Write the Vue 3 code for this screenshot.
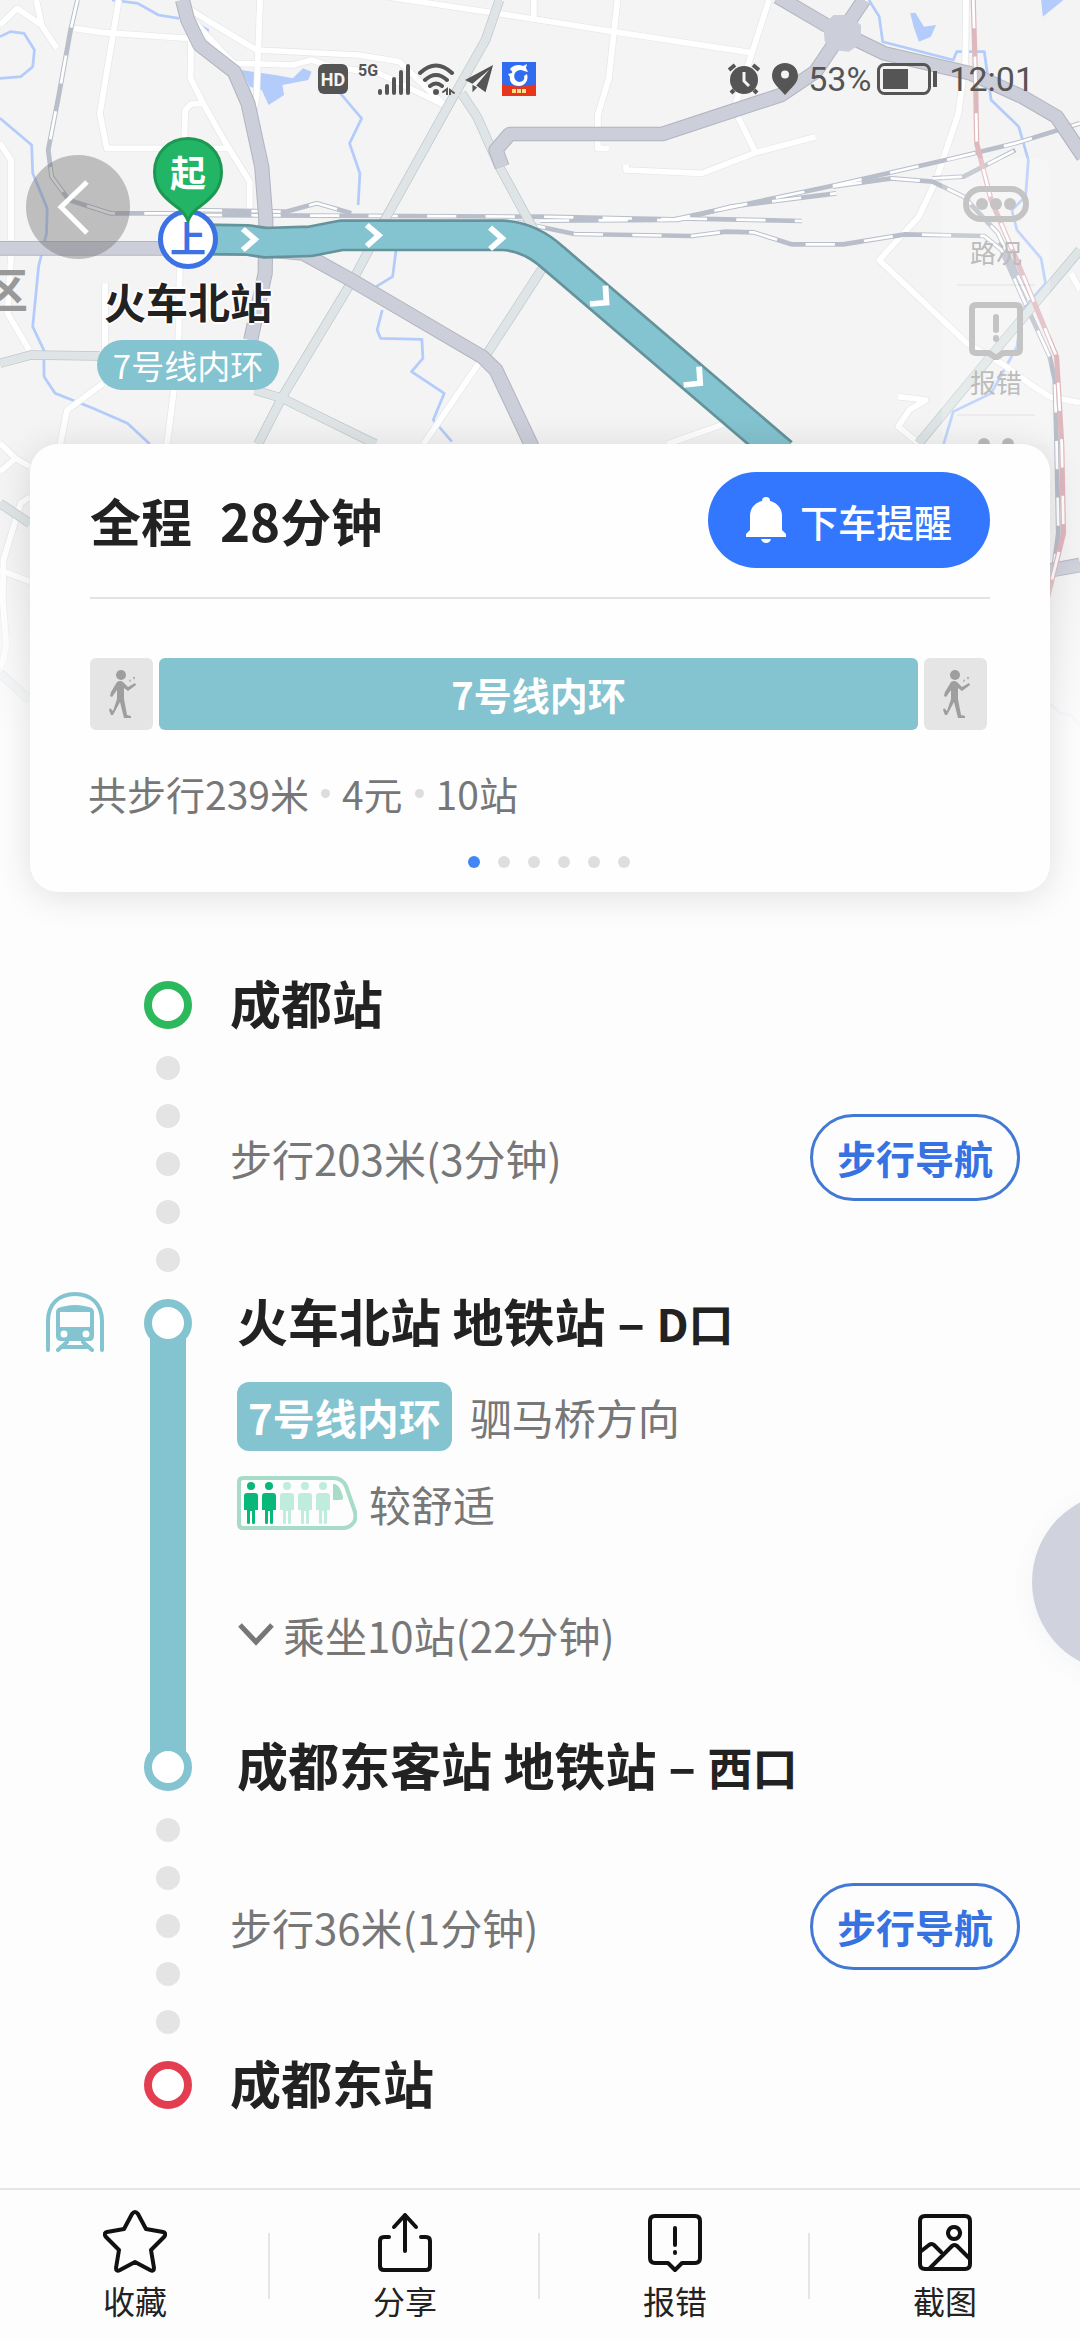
<template>
  <div class="page">
    <header class="map-area">
      <svg class="map" viewBox="0 0 3136 2205" preserveAspectRatio="none" aria-hidden="true">
        <path v-for="d in rivers" :key="d" :d="d" class="river" />
        <path v-for="d in lakes" :key="d" :d="d" class="lake" />
        <path v-for="d in streets" :key="'o' + d" :d="d" class="street-edge" />
        <path v-for="d in streets" :key="d" :d="d" class="street" />
        <path v-for="d in rails" :key="'b' + d" :d="d" class="rail" />
        <path v-for="d in rails" :key="d" :d="d" class="rail-dash" />
        <path v-for="d in avenues" :key="'o' + d" :d="d" class="avenue-edge" />
        <path v-for="d in avenues" :key="d" :d="d" class="avenue" />
        <path v-for="d in highways" :key="'o' + d" :d="d" class="highway-edge" />
        <path v-for="d in highways" :key="d" :d="d" class="highway" />
        <path d="M2390 75 2420 45 2465 45 2500 75 2500 130 2465 155 2420 150 2395 125Z" class="junction" />
        <path :d="redLine" class="red-line" />
        <path :d="redLine" class="rail-dash" />
        <path :d="route" class="route-edge" />
        <path :d="route" class="route" />
        <path v-for="d in arrows" :key="d" :d="d" class="arrow" />
      </svg>
      <div class="map-fade"></div>

      <div class="status-bar">
        <div class="status-group">
          <span class="hd">HD</span>
          <span class="net">5G</span>
          <svg class="signal" viewBox="0 0 32 32">
            <path d="M2 28v2M9 23v7M16 16v14M23 9v21M30 3v27" />
          </svg>
          <svg class="wifi" viewBox="0 0 38 32">
            <path d="M2 10Q18-5 34 10M7 17Q18 7 29 17M12 23Q18 18 24 23" />
            <circle cx="18" cy="29" r="3" />
            <path class="wifi-arrows" d="M25 29l4-3v6M36 30l-4-3v5" />
          </svg>
          <svg class="plane" viewBox="0 0 32 32">
            <path d="M31 1 1 17l8 4L27 6 13 23l10 7z" />
            <path d="M9 22v8l5-5z" />
          </svg>
          <svg class="app" viewBox="0 0 34 34">
            <path fill="#2f6cf0" d="M0 0h34v34H0z" />
            <path fill="#e8361c" d="M0 22q17 5 34 0v12H0z" />
            <path fill="#fff" d="M8 7c3-4 9-5 13-3l4-2-1 4 2 4-4-1c-3-2-7-1-9 2-2 4 0 8 4 9 4 0 6-3 5-6l3-2c2 6-2 12-8 12-7 0-10-5-9-9l-2-3 4-1c1-2-1-2-2-4z" />
            <path stroke="#ffe08a" stroke-width="4" stroke-dasharray="4 1" d="M10 29h15" />
          </svg>
        </div>
        <div class="status-group">
          <svg class="alarm" viewBox="0 0 32 32">
            <circle cx="16" cy="17" r="14" />
            <path class="alarm-legs" d="M1 7l6-5M31 7l-6-5M6 27l-3 3M26 27l3 3" />
            <path class="alarm-hands" d="M16 9v9l5 5" />
          </svg>
          <svg class="place" viewBox="0 0 26 32">
            <path fill-rule="evenodd" d="M13 0C6 0 0 5 0 13c0 7 7 12 13 19 6-7 13-12 13-19C26 5 20 0 13 0zm0 7.500a4 4 0 1 1 0 8 4 4 0 0 1 0-8z" />
          </svg>
          <span>53%</span>
          <svg class="battery" viewBox="0 0 60 32">
            <rect x="1.500" y="1.500" width="51" height="29" rx="6" />
            <path d="M6 6h25v20H6zM56 8h4v16h-4z" />
          </svg>
          <span>12:01</span>
        </div>
      </div>

      <button class="back" aria-label="返回">
        <svg viewBox="0 0 104 104"><path d="M61 27 35 52l26 26" /></svg>
      </button>

      <span class="district">区</span>

      <div class="start">
        <svg class="start-pin" viewBox="0 0 70 86">
          <path d="M35 1.500C16 1.500 1.500 16 1.500 35c0 16 9 25 21 34 6 4 10 8 12.500 15 2.500-7 6.500-11 12.500-15 12-9 21-18 21-34C68.500 16 54 1.500 35 1.500z" />
        </svg>
        <span class="start-text">起</span>
        <span class="board">上</span>
        <strong class="start-name">火车北站</strong>
        <span class="start-line">7号线内环</span>
      </div>

      <div class="tools">
        <button class="tool">
          <svg class="traffic-icon" viewBox="0 0 66 36">
            <rect x="3" y="3" width="60" height="30" rx="15" />
            <circle cx="19" cy="18" r="6" /><circle cx="33" cy="18" r="6" /><circle cx="47" cy="18" r="6" />
          </svg>
          路况
        </button>
        <button class="tool report">
          <svg class="report-icon" viewBox="0 0 54 58">
            <path d="M7 3h40q4 0 4 4v40q0 4-4 4H34l-7 5-7-5H7q-4 0-4-4V7q0-4 4-4zM27 15v13M27 36v1" />
          </svg>
          报错
        </button>
        <div class="tool-more"><i></i><i></i></div>
      </div>
    </header>

    <section class="card">
      <div class="card-head">
        <h1><span>全程</span><span>28分钟</span></h1>
        <button class="remind">
          <svg viewBox="0 0 40 48">
            <path d="M20 1a4 4 0 0 1 4 4c8 2 12 8 12 15v14l4 4v3H0v-3l4-4V20C4 13 8 7 16 5a4 4 0 0 1 4-4zM15 43h10q-1 4-5 4t-5-4z" />
          </svg>
          下车提醒
        </button>
      </div>
      <div class="segments">
        <span class="seg-walk"><svg viewBox="0 0 28 48"><path :d="walker" /><circle cx="13" cy="5" r="5" /></svg></span>
        <span class="seg-line">7号线内环</span>
        <span class="seg-walk"><svg viewBox="0 0 28 48"><path :d="walker" /><circle cx="13" cy="5" r="5" /></svg></span>
      </div>
      <p class="summary">
        <template v-for="(item, index) in summary" :key="item">
          <i v-if="index"></i><span>{{ item }}</span>
        </template>
      </p>
      <div class="pager">
        <i v-for="n in 6" :key="n" :class="{ active: n === page }"></i>
      </div>
    </section>

    <main class="steps">
      <div class="stop">
        <i class="ring green"></i>
        <h2>成都站</h2>
      </div>

      <div class="walk">
        <div class="dots"><i v-for="n in 5" :key="n"></i></div>
        <span>步行203米(3分钟)</span>
        <button class="navigate">步行导航</button>
      </div>

      <div class="ride">
        <svg class="metro" viewBox="0 0 58 60">
          <path class="metro-line" d="M2 58V29C2 12 13 2 29 2s27 10 27 27v29M21 50 12 58M37 50l9 8M15 55h28" />
          <path fill-rule="evenodd" d="M20 14q9-2 18 0l5 1q5 1 5 5v24q0 5-5 5H15q-5 0-5-5V20q0-4 5-5zM14 20v15h30V20zM18 38.500a3.500 3.500 0 1 0 0 7 3.500 3.500 0 0 0 0-7zM40 38.500a3.500 3.500 0 1 0 0 7 3.500 3.500 0 0 0 0-7z" />
        </svg>
        <div class="rail-col">
          <i class="ring"></i>
          <div class="rail-bar"></div>
          <i class="ring"></i>
        </div>
        <div class="ride-info">
          <h2>火车北站 地铁站 – <small>D口</small></h2>
          <div class="line-row">
            <span class="line-tag">7号线内环</span>
            <span>驷马桥方向</span>
          </div>
          <div class="crowd-row">
            <svg class="crowd" viewBox="0 0 120 54">
              <path class="crowd-frame" d="M6 2h90q9 0 13 8l8 23q3 8 0 13-4 6-11 6H6q-4 0-4-4V6q0-4 4-4z" />
              <path fill="#a6dcc8" d="M96 8h2q5 1 8 13 0 3-2 3h-8z" />
              <g v-for="n in 5" :key="n" :class="n < 3 ? 'person' : 'person free'" :transform="`translate(${n * 18 - 12} 6)`">
                <circle cx="8" cy="4" r="4" />
                <path d="M4 11h8q3 0 3 3v14h-3v13q0 1-1.500 1T9 41V29H7v12q0 1-1.500 1T4 41V28H1V14q0-3 3-3z" />
              </g>
            </svg>
            <span>较舒适</span>
          </div>
          <button class="expand">
            <svg viewBox="0 0 38 26"><path d="M3 4 19 21 35 4" /></svg>
            乘坐10站(22分钟)
          </button>
          <h2>成都东客站 地铁站 – <small>西口</small></h2>
        </div>
      </div>

      <div class="walk">
        <div class="dots"><i v-for="n in 5" :key="n"></i></div>
        <span>步行36米(1分钟)</span>
        <button class="navigate">步行导航</button>
      </div>

      <div class="stop">
        <i class="ring red"></i>
        <h2>成都东站</h2>
      </div>
    </main>

    <button class="floating" aria-label="悬浮球"></button>

    <nav class="actions">
      <button v-for="action in actions" :key="action.label">
        <svg viewBox="0 0 64 64">
          <path v-for="d in action.paths" :key="d" :d="d" />
        </svg>
        {{ action.label }}
      </button>
    </nav>
  </div>
</template>

<script setup>
import { ref } from 'vue'

const page = ref(1)
const summary = ['共步行239米', '4元', '10站']

const actions = [
  {
    label: '收藏',
    paths: ['M29 5q3-4 6 0l8 15 17 3q4 1 1 5L48 41l3 18q0 4-4 2L32 53 17 61q-4 2-4-2l3-18L3 28q-3-4 1-5l17-3z']
  },
  {
    label: '分享',
    paths: ['M32 42V6M21 18 32 6l11 12', 'M16 28h-5q-4 0-4 4v25q0 4 4 4h42q4 0 4-4V32q0-4-4-4h-5']
  },
  {
    label: '报错',
    paths: ['M12 7h40q5 0 5 5v37q0 5-5 5H39l-7 7-7-7H12q-5 0-5-5V12q0-5 5-5z', 'M32 19v17M32 43v1']
  },
  {
    label: '截图',
    paths: ['M12 7h40q5 0 5 5v43q0 5-5 5H12q-5 0-5-5V12q0-5 5-5z', 'M7 43l9-7q3-2 5 0l7 7M17 59l22-22q2-2 5 0l13 13', 'M41 18a6 6 0 1 0 .1 0z']
  }
]

const walker = 'M9 12q3-2 6 0l5 5 7-4 1 2-8 6-4-3v11l3 16 4 1v2h-7l-4-16-7 13H3l-2-5 1-2 3 3 4-12V20l-5 7-2-1 1-4zM22 9l1 2-2 1zM25 7h2l-1 3z'

// map geometry
const rivers = [
  'M325 0 400 10 460 45 520 55',
  'M0 110 30 95 70 100 100 150 95 200 60 230 0 235',
  'M0 355 92 435 95 520 137 625 135 700 112 800 95 980 127 1050 128 1130 160 1180 270 1225 370 1270 435 1332',
  'M570 70 603 90 598 115',
  'M980 270 1050 355 1015 430 1045 520 1040 615',
  'M1150 750 1140 830 1092 860M1110 930 1095 990 1105 1015 1225 1018 1228 1075 1195 1115 1290 1180 1258 1260 1312 1325',
  'M2523 0 2553 50 2563 125 2768 180 2778 155 2858 155 2878 300 2958 380 2986 480 2978 590 2938 630 2953 690 3023 775 3036 850 2968 930 2953 1040 2878 1180 2768 1235 2740 1332',
  'M3049 2110 3078 2140 3110 2145 3136 2175'
]
const lakes = [
  'M700 210 800 225 850 235 880 205 905 215 895 240 820 255 825 285 780 315 760 270 725 260Z',
  'M2643 40 2658 38 2683 80 2718 75 2703 110 2668 125 2653 80Z',
  'M3023 0H3088L3028 50Z'
]
const streets = [
  'M345 0 290 340 310 445H660',
  'M215 85 300 98 550 115',
  'M555 120 553 235 590 310 650 420 725 545V650',
  'M590 310 555 312 538 330 535 420',
  'M755 0 745 290 735 340',
  'M555 30 600 60 745 150 1040 165 1160 185 1290 315',
  'M550 50 640 150 680 190 850 195 905 180 960 200 1100 220 1290 315',
  'M1120 -10 1568 60 1780 95 2180 158',
  'M1550 0V65',
  'M1793 0 1768 235 1736 345V445H1768',
  'M2233 0 2183 160 2133 320M2143 350 2193 455M2368 410 2188 460 2038 520 1818 510V495',
  'M2805 0 2803 180 2783 340 2718 540 2668 650 2553 780 2808 1030 2908 1090 2988 1150 3048 1190 3136 1208',
  'M0 75 50 25 120 75 165 145M105 0 120 70',
  'M0 430 32 480V720M32 765 22 940 85 1050',
  'M305 850V1050M522 800 518 1020M505 1170 485 1332M300 1150 195 1230 175 1332',
  'M1390 1090 1230 1332',
  'M2108 1270 1938 1332',
  'M2608 1190 2688 1200 2640 1230 2608 1280 2668 1330M3110 820 3136 870',
  'M0 1330 45 1375 87 1400M45 1375 0 1415',
  'M87 1490 60 1510 10 1680 8 1800 18 1930 10 1980 0 2000',
  'M0 1710 87 1745'
]
const avenues = [
  'M1450 0 1410 120 1300 320 1120 655 1030 830 820 1190 750 1332',
  'M1340 280 1385 350 1450 500 1550 690',
  'M1578 800 1415 1060',
  'M740 1170 820 1195 1090 1332',
  'M0 1090 90 1065 290 1068',
  'M3136 750 2908 1030 2668 1330',
  'M0 1510 87 1570M0 2020 87 2100'
]
const highways = [
  'M530 0 545 60 580 135 680 215 720 310 760 500 772 660 770 820 728 1020',
  'M0 745H720L880 760 1020 840 1400 1070 1440 1110 1545 1340',
  'M1458 500 1440 450 1480 402H1923L2268 285 2368 215 2443 100 2508 0',
  'M2258 -10 2398 75 2448 100 2568 160 2818 220 2968 290 3068 350 3146 470',
  'M3030 1715 3136 1695'
]
const rails = [
  'M225 0 205 90 170 290 140 450 150 530 200 600 320 640 560 640',
  'M560 630 830 635 920 610 1020 640',
  'M560 645 1568 650 1958 658 2428 555 2768 475 2948 430 3136 370',
  'M1568 662 1968 660 2120 620 2428 580',
  'M1968 655 2328 663',
  'M1500 665 1568 680 1668 702 2008 708 2108 695 2188 697 2298 733 2448 733 2628 703 2858 708 2908 750 2968 890 3048 1070 3063 1140 3068 1332 3073 1600 3060 1700',
  'M2418 560 2588 535 2708 545 2798 590 2898 700 2988 900',
  'M2708 535 2798 530 2948 450'
]
const redLine = 'M2826 0 2833 250 2836 430 2878 600 2948 770 3068 1070 3083 1332 3088 1600 3040 1800'
const route = 'M590 718 720 720 770 728 900 724 990 706H1460Q1540 710 1608 775L2270 1360'
const arrows = [
  'M705 687 740 718 705 750',
  'M1065 675 1100 706 1065 738',
  'M1423 683 1458 715 1423 747',
  'M1758 857 1761 908 1713 912',
  'M2030 1100 2033 1150 1985 1155'
]
</script>

<style>
body {
  background: #fdfdfd;
}
</style>

<style scoped>
.page {
  position: relative;
  display: flex;
  flex-direction: column;
  min-height: 100vh;
  overflow: hidden;
  color: #222;
  font-family: "Noto Sans CJK SC", "Noto Sans", sans-serif;
}

h1,
h2,
p {
  margin: 0;
}

button {
  padding: 0;
  border: 0;
  background: none;
  color: inherit;
  font: inherit;
}

svg {
  display: block;
  flex: none;
}

i {
  display: block;
}

/* map */
.map-area {
  position: relative;
  height: 444px;
}

.map,
.map-fade {
  position: absolute;
  top: 0;
  left: 0;
  width: 100%;
  height: 735px;
}

.map {
  background: #f4f4f4;
}

.map path {
  fill: none;
  stroke-linejoin: round;
}

.map-fade {
  background: linear-gradient(rgba(253, 253, 253, 0) 75%, #fdfdfd);
}

.map .river {
  stroke: #b3ccfb;
  stroke-width: 8;
}

.map .lake {
  fill: #b3ccfb;
}

.map .junction {
  fill: #ccced9;
}

.map .street-edge {
  stroke: #e4e6e8;
  stroke-width: 21;
}

.map .street {
  stroke: #fff;
  stroke-width: 17;
}

.map .rail {
  stroke: #b9bfca;
  stroke-width: 14;
}

.map .rail-dash {
  stroke: #fff;
  stroke-width: 8;
  stroke-dasharray: 85;
}

.map .avenue-edge {
  stroke: #bcc8ca;
  stroke-width: 28;
}

.map .avenue {
  stroke: #dfe5e7;
  stroke-width: 24;
}

.map .highway-edge {
  stroke: #b2b5c0;
  stroke-width: 44;
}

.map .highway {
  stroke: #ccced9;
  stroke-width: 38;
}

.map .red-line {
  stroke: #dfb8be;
  stroke-width: 15;
}

.map .route-edge {
  stroke: #64939b;
  stroke-width: 96;
}

.map .route {
  stroke: #84c3d0;
  stroke-width: 80;
}

.map .arrow {
  stroke: #fff;
  stroke-width: 17;
  stroke-linejoin: miter;
}

/* status bar */
.status-bar {
  position: relative;
  display: flex;
  justify-content: space-between;
  align-items: center;
  height: 34px;
  padding: 62px 46px 0 318px;
  color: #555;
  font: 34px/34px Roboto, sans-serif;
}

.status-group {
  display: flex;
  align-items: center;
}

.status-group svg {
  height: 32px;
  fill: #555;
}

.hd {
  width: 30px;
  height: 30px;
  border-radius: 6px;
  background: #555;
  color: #f4f4f4;
  font-size: 18px;
  font-weight: 700;
  line-height: 31px;
  text-align: center;
}

.net {
  align-self: flex-start;
  margin-left: 10px;
  font-size: 16px;
  font-weight: 700;
  line-height: 18px;
}

.signal {
  width: 32px;
}

.signal path,
.wifi path {
  fill: none;
  stroke: #555;
  stroke-width: 4;
  stroke-linecap: round;
}

.wifi .wifi-arrows {
  stroke-width: 2;
}

.wifi {
  width: 38px;
  margin-left: 8px;
}

.plane {
  width: 30px;
  margin-left: 8px;
}

.status-group .app {
  width: 34px;
  height: 34px;
  margin-left: 8px;
}

.alarm {
  width: 32px;
}

.alarm .alarm-legs,
.alarm .alarm-hands {
  fill: none;
  stroke: #555;
  stroke-width: 4;
}

.alarm .alarm-hands {
  stroke: #f4f4f4;
  stroke-width: 3;
}

.place {
  width: 26px;
  margin: 0 10px 0 12px;
}

.battery {
  width: 60px;
  margin: 0 12px 0 6px;
}

.battery rect {
  fill: none;
  stroke: #555;
  stroke-width: 3;
}

/* things laid over the map */
.back {
  position: absolute;
  top: 155px;
  left: 26px;
  width: 104px;
  height: 104px;
  border-radius: 50%;
  background: rgba(115, 115, 115, 0.42);
}

.back path {
  fill: none;
  stroke: #fff;
  stroke-width: 5;
}

.district {
  position: absolute;
  top: 262px;
  left: -18px;
  color: #999;
  font-size: 46px;
  font-weight: 700;
  line-height: 50px;
}

.start {
  position: absolute;
  top: 137px;
  left: 88px;
  display: flex;
  flex-direction: column;
  align-items: center;
  width: 200px;
}

.start-pin {
  position: absolute;
  top: 0;
  z-index: 1;
  width: 70px;
  height: 86px;
  fill: #22b565;
  stroke: #1c9853;
  stroke-width: 3;
}

.start-text {
  position: relative;
  z-index: 1;
  height: 72px;
  color: #fff;
  font-size: 36px;
  font-weight: 700;
  line-height: 68px;
}

.board {
  box-sizing: border-box;
  width: 60px;
  height: 60px;
  border: 5px solid #3c72e4;
  border-radius: 50%;
  background: #fff;
  color: #3c72e4;
  font-size: 36px;
  font-weight: 700;
  line-height: 46px;
  text-align: center;
}

.start-name {
  margin-top: 7px;
  font-size: 42px;
  font-weight: 700;
  line-height: 50px;
  text-shadow: 2px 0 #fff, -2px 0 #fff, 0 2px #fff, 0 -2px #fff;
}

.start-line {
  margin-top: 14px;
  padding: 0 16px;
  border-radius: 26px;
  background: #84c3d0;
  color: #fff;
  font-size: 33px;
  line-height: 50px;
}

.tools {
  position: absolute;
  top: 158px;
  right: 30px;
  display: flex;
  flex-direction: column;
  align-items: center;
  width: 108px;
  height: 286px;
  overflow: hidden;
  border-radius: 12px 12px 0 0;
  background: rgba(255, 255, 255, 0.2);
  color: #bcbcbc;
}

.tool {
  display: flex;
  flex-direction: column;
  align-items: center;
  width: 78px;
  padding: 28px 0 14px;
  border-bottom: 2px solid rgba(0, 0, 0, 0.04);
  font-size: 26px;
  line-height: 36px;
}

.tool svg {
  fill: none;
  stroke: #c4c4c4;
  stroke-width: 6;
  stroke-linejoin: round;
  stroke-linecap: round;
}

.traffic-icon {
  width: 66px;
  height: 36px;
  margin-bottom: 12px;
}

.tool .traffic-icon circle {
  fill: #c4c4c4;
  stroke: none;
}

.report {
  padding-top: 16px;
}

.report-icon {
  width: 54px;
  height: 58px;
  margin-bottom: 4px;
}

.tool-more {
  display: flex;
  gap: 12px;
  padding-top: 22px;
}

.tool-more i {
  width: 12px;
  height: 12px;
  border-radius: 50%;
  background: #bcbcbc;
}

/* route card */
.card {
  position: relative;
  margin: 0 30px;
  padding: 28px 60px 24px;
  border-radius: 28px;
  background: #fefefe;
  box-shadow: 0 4px 36px rgba(0, 0, 0, 0.12);
}

.card-head {
  display: flex;
  justify-content: space-between;
  align-items: center;
  padding-bottom: 29px;
  border-bottom: 2px solid #e3e3e3;
}

h1 {
  display: flex;
  gap: 28px;
  font-size: 51px;
  font-weight: 700;
  line-height: 60px;
}

.remind {
  display: flex;
  justify-content: center;
  align-items: center;
  gap: 14px;
  width: 282px;
  height: 96px;
  border-radius: 48px;
  background: #3377ff;
  color: #fff;
  font-size: 38px;
  font-weight: 500;
}

.remind svg {
  width: 40px;
  height: 48px;
  fill: #fff;
}

.segments {
  display: flex;
  gap: 6px;
  margin: 59px 3px 0 0;
}

.segments span {
  height: 72px;
  border-radius: 6px;
}

.seg-walk {
  display: flex;
  justify-content: center;
  align-items: center;
  width: 63px;
  background: #e5e5e5;
}

.seg-walk svg {
  width: 28px;
  height: 48px;
  fill: #9e9e9e;
}

.seg-line {
  flex: 1;
  background: #84c3d0;
  color: #fff;
  font-size: 38px;
  font-weight: 700;
  line-height: 72px;
  text-align: center;
}

.summary {
  display: flex;
  align-items: center;
  gap: 12px;
  margin: 38px 0 0 -2px;
  color: #777;
  font-size: 39px;
  line-height: 50px;
}

.summary i {
  width: 9px;
  height: 9px;
  border-radius: 50%;
  background: #ddd;
}

.pager {
  display: flex;
  justify-content: center;
  gap: 18px;
  margin: 38px 0 0 18px;
}

.pager i {
  width: 12px;
  height: 12px;
  border-radius: 50%;
  background: #dedede;
}

.pager .active {
  background: #4285f4;
}

/* steps */
.steps {
  flex: 1;
  padding: 65px 60px 55px 0;
  color: #777;
  font-size: 42px;
}

h2 {
  padding-bottom: 6px;
  color: #222;
  font-size: 51px;
  font-weight: 700;
  line-height: 90px;
}

h2 small {
  font-size: 45px;
  line-height: 1;
}

.ring {
  box-sizing: border-box;
  width: 48px;
  height: 48px;
  border: 8px solid #84c3d0;
  border-radius: 50%;
  background: #fff;
}

.green {
  border-color: #2cb85c;
}

.red {
  border-color: #e33e50;
}

.stop {
  display: flex;
  align-items: center;
  gap: 38px;
  padding-left: 144px;
}

.walk {
  box-sizing: border-box;
  display: flex;
  align-items: center;
  height: 222px;
  padding-left: 156px;
}

.stop + .walk {
  padding-bottom: 14px;
}

.walk span {
  flex: 1;
}

.dots {
  display: flex;
  flex-direction: column;
  align-self: flex-start;
  gap: 24px;
  margin: 3px 50px 0 0;
}

.dots i {
  width: 24px;
  height: 24px;
  border-radius: 50%;
  background: #e4e4e4;
}

.navigate {
  box-sizing: border-box;
  width: 210px;
  height: 87px;
  border: 3px solid #4279d4;
  border-radius: 44px;
  color: #3672e2;
  font-size: 39px;
  font-weight: 700;
}

.ride {
  display: flex;
  padding-left: 46px;
}

.metro {
  width: 58px;
  height: 60px;
  margin-top: 17px;
  fill: #84c3d0;
}

.metro-line {
  fill: none;
  stroke: #84c3d0;
  stroke-width: 4;
  stroke-linecap: round;
}

.rail-col {
  display: flex;
  flex-direction: column;
  align-items: center;
  margin: 24px 45px 24px 40px;
}

.rail-col .ring {
  position: relative;
}

.rail-bar {
  flex: 1;
  width: 36px;
  margin: -8px 0;
  background: #84c3d0;
}

.line-row,
.crowd-row,
.expand {
  display: flex;
  align-items: center;
}

.line-row {
  gap: 18px;
  margin-top: 11px;
}

.line-tag {
  padding: 0 11px;
  border-radius: 12px;
  background: #84c3d0;
  color: #fff;
  font-weight: 700;
  line-height: 69px;
}

.crowd-row {
  gap: 12px;
  height: 54px;
  margin-top: 25px;
}

.crowd {
  width: 120px;
  height: 54px;
}

.crowd-frame {
  fill: none;
  stroke: #a6dcc8;
  stroke-width: 4;
}

.person {
  fill: #08b878;
}

.free {
  fill: #c0ecdd;
}

.expand {
  gap: 8px;
  height: 60px;
  margin: 74px 0 55px;
}

.expand svg {
  width: 38px;
  height: 26px;
  fill: none;
  stroke: #777;
  stroke-width: 5;
}

.floating {
  position: absolute;
  top: 1492px;
  right: -132px;
  width: 180px;
  height: 180px;
  border-radius: 50%;
  background: #d0d3de;
  box-shadow: 0 4px 24px rgba(80, 100, 160, 0.06);
}

/* bottom bar */
.actions {
  display: flex;
  align-items: center;
  height: 150px;
  border-top: 2px solid #e5e5e5;
}

.actions button {
  position: relative;
  flex: 1;
  display: flex;
  flex-direction: column;
  align-items: center;
  gap: 5px;
  font-size: 32px;
  line-height: 44px;
}

.actions button + button::before {
  content: "";
  position: absolute;
  top: 24px;
  left: -2px;
  width: 2px;
  height: 66px;
  background: #e5e5e5;
}

.actions svg {
  width: 64px;
  height: 64px;
  fill: none;
  stroke: #111;
  stroke-width: 4;
  stroke-linecap: round;
  stroke-linejoin: round;
}
</style>
